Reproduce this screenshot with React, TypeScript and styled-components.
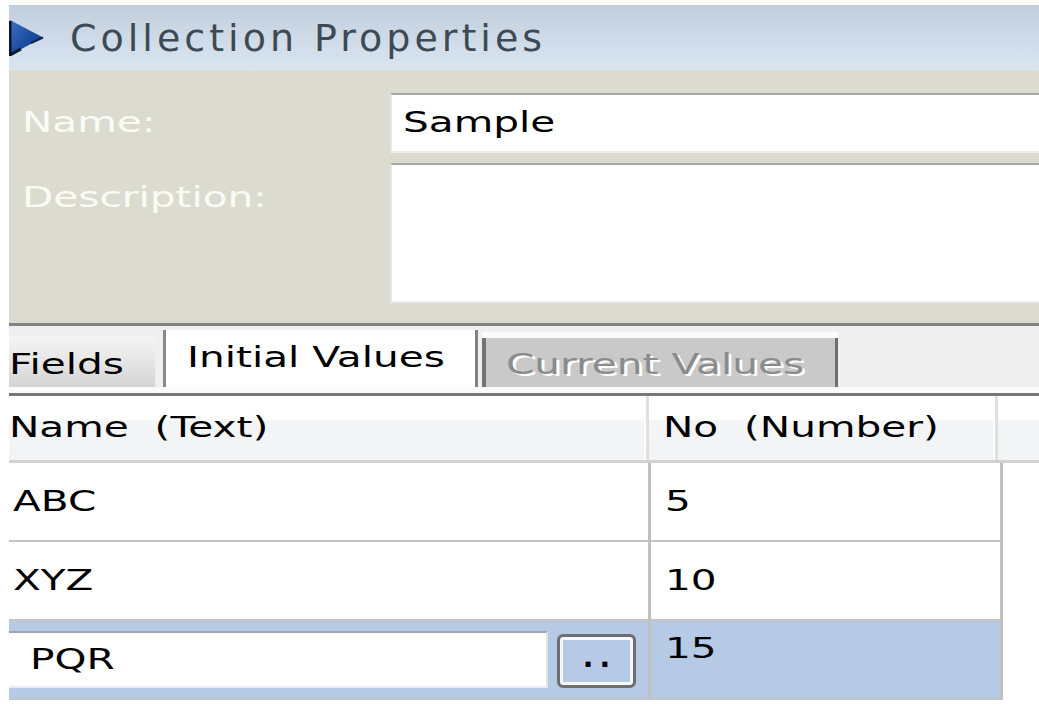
import React from "react";
import styled, { createGlobalStyle } from "styled-components";

const GlobalStyle = createGlobalStyle`
  html, body { margin: 0; padding: 0; background: #ffffff; }
  body {
    font-family: "DejaVu Sans", Verdana, sans-serif;
    font-size: 28px;
    line-height: 28px;
    color: #000000;
  }
  * { box-sizing: border-box; }
`;

const Page = styled.div`
  width: 1039px;
  padding: 5px 0 0 9px;
  display: flex;
  flex-direction: column;
`;

/* Pixel-font look: the screenshot is horizontally stretched, so text is widened */
const Stretch = styled.span<{ $sx?: number }>`
  display: inline-block;
  white-space: pre;
  transform: scaleX(${(p) => p.$sx ?? 1.45});
  transform-origin: 0 50%;
`;

const TitleBar = styled.header`
  height: 65px;
  display: flex;
  align-items: center;
  gap: 26px;
  background: linear-gradient(to bottom, #c2cedc 0%, #cfdbe8 55%, #d9e5f1 100%);
`;

const Title = styled.h1`
  margin: 0;
  font-size: 38px;
  line-height: 38px;
  font-weight: normal;
  letter-spacing: 4px;
  color: #3d4a55;
`;

const Form = styled.section`
  background: #dcdbd0;
  display: grid;
  grid-template-columns: 381px 1fr;
  grid-template-rows: 60px 140px;
  row-gap: 10px;
  padding: 23px 0 20px;
`;

const FieldLabel = styled.label<{ $top?: boolean }>`
  padding-left: 13px;
  color: #fbfbf6;
  align-self: ${(p) => (p.$top ? "start" : "center")};
  margin-top: ${(p) => (p.$top ? "21px" : "0")};
`;

const TextBox = styled.div<{ $multi?: boolean }>`
  background: #ffffff;
  border-top: 2px solid #a6a6a6;
  border-left: 2px solid #e6e6e6;
  border-bottom: 2px solid #eeeeee;
  display: flex;
  align-items: ${(p) => (p.$multi ? "flex-start" : "center")};
  padding-left: 11px;
`;

const TabBar = styled.nav`
  border-top: 3px solid #828282;
  border-bottom: 3px solid #777777;
  height: 73px;
  display: flex;
  align-items: flex-start;
  background: linear-gradient(to bottom, #efefef 0, #efefef 61px, #fbfbfb 61px);
`;

type TabKind = "inactive" | "active" | "disabled";

const Tab = styled.div<{ $kind: TabKind }>`
  display: flex;
  align-items: flex-start;
  ${(p) =>
    p.$kind === "inactive"
      ? `
    width: 146px;
    height: 51px;
    margin-top: 10px;
    margin-right: 8px;
    padding-top: 15px;
    background: linear-gradient(to bottom, #f4f4f4 0%, #e6e6e6 50%, #d3d3d3 100%);
  `
      : p.$kind === "active"
      ? `
    width: 315px;
    height: 57px;
    margin-top: 4px;
    padding: 14px 0 0 21px;
    background: #ffffff;
    border-left: 3px solid #8a8a8a;
    border-right: 3px solid #828282;
  `
      : `
    width: 356px;
    height: 49px;
    margin-top: 12px;
    margin-left: 4px;
    padding: 13px 0 0 20px;
    background: #c9c9c9;
    border-left: 4px solid #737373;
    border-right: 3px solid #6e6e6e;
    box-shadow: 0 -6px 0 #fbfbfb;
    color: #8b8b8b;
    text-shadow: 2px 2px 0 #ffffff;
  `}
`;

const Table = styled.div`
  display: flex;
  flex-direction: column;
`;

const HeaderRow = styled.div`
  display: grid;
  grid-template-columns: 640px 349px 1fr;
  height: 67px;
  border-bottom: 3px solid #d2d2d2;
  background: linear-gradient(to bottom, #ffffff 0%, #ffffff 36%, #f4f5f7 40%, #f1f3f5 100%);
`;

const HeaderCell = styled.div<{ $pad?: number; $last?: boolean }>`
  display: flex;
  align-items: center;
  padding-left: ${(p) => p.$pad ?? 0}px;
  border-right: ${(p) => (p.$last ? "none" : "3px solid #e0e0e0")};
  box-shadow: ${(p) => (p.$last ? "none" : "inset -2px 0 0 #ffffff")};
`;

const Row = styled.div<{ $selected?: boolean }>`
  width: 994px;
  display: grid;
  grid-template-columns: 642px 352px;
  height: 79px;
  border-bottom: 2px solid #c4c4c4;
  background: ${(p) => (p.$selected ? "#b6cae6" : "#ffffff")};
`;

const Cell = styled.div<{ $pad: number; $alignTop?: boolean }>`
  display: flex;
  align-items: ${(p) => (p.$alignTop ? "flex-start" : "center")};
  padding-left: ${(p) => p.$pad}px;
  padding-top: ${(p) => (p.$alignTop ? "14px" : "0")};
  border-right: 3px solid #c0c0c0;
`;

const Editor = styled.div`
  display: flex;
  align-items: center;
  gap: 9px;
`;

const EditBox = styled.div`
  width: 539px;
  height: 57px;
  background: #ffffff;
  border-top: 2px solid #9ca6b8;
  border-right: 2px solid #e3e3e3;
  border-bottom: 2px solid #e8edf5;
  display: flex;
  align-items: center;
  padding-left: 21px;
`;

const EllipsisButton = styled.button`
  width: 79px;
  height: 54px;
  margin-top: 2px;
  padding: 7px 0 0;
  border: 3px solid #6e6e6e;
  border-radius: 6px;
  background: #b6cae6;
  box-shadow: inset 0 0 0 3px #f5f7fb;
  font-family: "DejaVu Sans", Verdana, sans-serif;
  font-weight: bold;
  font-size: 28px;
  line-height: 28px;
  letter-spacing: 6px;
  text-indent: 6px;
  color: #000000;
  display: flex;
  justify-content: center;
  align-items: flex-start;
`;

function PanelArrow() {
  return (
    <svg width="35" height="37" viewBox="0 0 35 37" aria-hidden="true">
      <defs>
        <linearGradient id="arrowFill" x1="0" y1="0" x2="1" y2="1">
          <stop offset="0" stopColor="#3d71c6" />
          <stop offset="0.55" stopColor="#1d4c9e" />
          <stop offset="1" stopColor="#0f2e6e" />
        </linearGradient>
      </defs>
      <polygon points="1,1 34,18.5 1,36" fill="url(#arrowFill)" />
      <polyline points="1,2 1,36 12,30" fill="none" stroke="#0a1530" strokeWidth="3" />
      <polyline points="22,24 34,18.5" fill="none" stroke="#0e2556" strokeWidth="2" />
    </svg>
  );
}

const rows = [
  { name: "ABC", no: "5" },
  { name: "XYZ", no: "10" },
];

export default function App() {
  return (
    <>
      <GlobalStyle />
      <Page>
        <TitleBar>
          <PanelArrow />
          <Title>Collection Properties</Title>
        </TitleBar>

        <Form>
          <FieldLabel>
            <Stretch>Name:</Stretch>
          </FieldLabel>
          <TextBox>
            <Stretch>Sample</Stretch>
          </TextBox>
          <FieldLabel $top>
            <Stretch>Description:</Stretch>
          </FieldLabel>
          <TextBox $multi />
        </Form>

        <TabBar>
          <Tab $kind="inactive">
            <Stretch>Fields</Stretch>
          </Tab>
          <Tab $kind="active">
            <Stretch>Initial Values</Stretch>
          </Tab>
          <Tab $kind="disabled">
            <Stretch>Current Values</Stretch>
          </Tab>
        </TabBar>

        <Table>
          <HeaderRow>
            <HeaderCell>
              <Stretch>Name  (Text)</Stretch>
            </HeaderCell>
            <HeaderCell $pad={14}>
              <Stretch>No  (Number)</Stretch>
            </HeaderCell>
            <HeaderCell $last />
          </HeaderRow>

          {rows.map((r) => (
            <Row key={r.name}>
              <Cell $pad={4}>
                <Stretch>{r.name}</Stretch>
              </Cell>
              <Cell $pad={14}>
                <Stretch>{r.no}</Stretch>
              </Cell>
            </Row>
          ))}

          <Row $selected>
            <Cell $pad={0}>
              <Editor>
                <EditBox>
                  <Stretch>PQR</Stretch>
                </EditBox>
                <EllipsisButton type="button">..</EllipsisButton>
              </Editor>
            </Cell>
            <Cell $pad={14} $alignTop>
              <Stretch>15</Stretch>
            </Cell>
          </Row>
        </Table>
      </Page>
    </>
  );
}
